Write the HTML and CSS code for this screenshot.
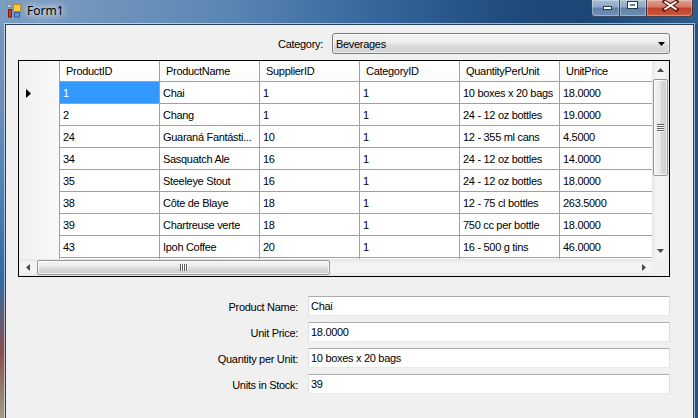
FILE: index.html
```html
<!DOCTYPE html>
<html>
<head>
<meta charset="utf-8">
<title>Form1</title>
<link rel="stylesheet" href="styles.css">
</head>
<body>
<div class="window">
  <div class="titlebar">
    <svg class="appicon" width="14" height="14" viewBox="0 0 14 14">
      <rect x="0" y="0" width="5" height="4" fill="#c4c4c4"/>
      <rect x="0.5" y="0.5" width="4" height="3" fill="none" stroke="#8a8a8a" stroke-width="1"/>
      <rect x="1.5" y="5.5" width="3" height="7.5" fill="#d8392a" stroke="#7a1b12" stroke-width="1"/>
      <rect x="6.5" y="0.5" width="7" height="7" fill="#f8cf35" stroke="#c48a14" stroke-width="1"/>
      <rect x="7.5" y="8.5" width="5" height="4.5" fill="#5d93df" stroke="#2b5aa6" stroke-width="1"/>
    </svg>
    <span class="title">Form1</span>
    <div class="caption-btns">
      <div class="cbtn cmin">
        <svg width="28" height="17" viewBox="0 0 28 17"><rect x="12.5" y="7.5" width="8" height="3" fill="#fff" stroke="#26384c" stroke-width="1"/></svg>
      </div>
      <div class="cbtn cmax">
        <svg width="27" height="17" viewBox="0 0 27 17"><rect x="8" y="2" width="11" height="8" fill="#26384c"/><rect x="9" y="3" width="9" height="6" fill="#fff"/><rect x="11" y="5" width="5" height="2" fill="#5d7ea6"/></svg>
      </div>
      <div class="cbtn cclose">
        <svg width="47" height="17" viewBox="0 0 47 17"><path d="M18.5 2.5 L30.5 10.5 M30.5 2.5 L18.5 10.5" stroke="#5a1c12" stroke-width="4" stroke-linecap="square"/><path d="M18.5 2.5 L30.5 10.5 M30.5 2.5 L18.5 10.5" stroke="#fff" stroke-width="2"/></svg>
      </div>
    </div>
  </div>

  <div class="client">
    <div class="cat-row">
      <span class="cat-label">Category:</span>
      <div class="combo">
        <span class="combo-text">Beverages</span>
        <svg class="combo-arrow" width="7" height="4" viewBox="0 0 7 4"><path d="M0 0 H7 L3.5 4 Z" fill="#000"/></svg>
      </div>
    </div>

    <div class="dgv">
      <div class="dgv-view">
        <div class="row head">
          <div class="rh"></div>
          <div class="ch">ProductID</div>
          <div class="ch">ProductName</div>
          <div class="ch">SupplierID</div>
          <div class="ch">CategoryID</div>
          <div class="ch">QuantityPerUnit</div>
          <div class="ch">UnitPrice</div>
        </div>
        <div class="row">
          <div class="rh"><svg class="cur" width="5" height="9" viewBox="0 0 5 9"><path d="M0 0 L5 4.5 L0 9 Z" fill="#000"/></svg></div>
          <div class="c sel">1</div><div class="c">Chai</div><div class="c">1</div><div class="c">1</div><div class="c">10 boxes x 20 bags</div><div class="c">18.0000</div>
        </div>
        <div class="row">
          <div class="rh"></div>
          <div class="c">2</div><div class="c">Chang</div><div class="c">1</div><div class="c">1</div><div class="c">24 - 12 oz bottles</div><div class="c">19.0000</div>
        </div>
        <div class="row">
          <div class="rh"></div>
          <div class="c">24</div><div class="c">Guaraná Fantásti...</div><div class="c">10</div><div class="c">1</div><div class="c">12 - 355 ml cans</div><div class="c">4.5000</div>
        </div>
        <div class="row">
          <div class="rh"></div>
          <div class="c">34</div><div class="c">Sasquatch Ale</div><div class="c">16</div><div class="c">1</div><div class="c">24 - 12 oz bottles</div><div class="c">14.0000</div>
        </div>
        <div class="row">
          <div class="rh"></div>
          <div class="c">35</div><div class="c">Steeleye Stout</div><div class="c">16</div><div class="c">1</div><div class="c">24 - 12 oz bottles</div><div class="c">18.0000</div>
        </div>
        <div class="row">
          <div class="rh"></div>
          <div class="c">38</div><div class="c">Côte de Blaye</div><div class="c">18</div><div class="c">1</div><div class="c">12 - 75 cl bottles</div><div class="c">263.5000</div>
        </div>
        <div class="row">
          <div class="rh"></div>
          <div class="c">39</div><div class="c">Chartreuse verte</div><div class="c">18</div><div class="c">1</div><div class="c">750 cc per bottle</div><div class="c">18.0000</div>
        </div>
        <div class="row">
          <div class="rh"></div>
          <div class="c">43</div><div class="c">Ipoh Coffee</div><div class="c">20</div><div class="c">1</div><div class="c">16 - 500 g tins</div><div class="c">46.0000</div>
        </div>
        <div class="row">
          <div class="rh"></div>
          <div class="c"></div><div class="c"></div><div class="c"></div><div class="c"></div><div class="c"></div><div class="c"></div>
        </div>
      </div>

      <div class="vscroll">
        <div class="sbtn"><svg width="7" height="4" viewBox="0 0 7 4"><path d="M3.5 0 L7 4 H0 Z" fill="#4a4a4a"/></svg></div>
        <div class="vthumb">
          <svg width="7" height="8" viewBox="0 0 7 8"><g stroke-width="1"><path d="M0 0.5H7M0 2.5H7M0 4.5H7M0 6.5H7" stroke="#5e5e5e"/><path d="M0 1.5H7M0 3.5H7M0 5.5H7M0 7.5H7" stroke="#fff"/></g></svg>
        </div>
        <div class="sfill"></div>
        <div class="sbtn"><svg width="7" height="4" viewBox="0 0 7 4"><path d="M0 0 H7 L3.5 4 Z" fill="#4a4a4a"/></svg></div>
      </div>

      <div class="hscroll">
        <div class="sbtn"><svg width="4" height="7" viewBox="0 0 4 7"><path d="M4 0 V7 L0 3.5 Z" fill="#4a4a4a"/></svg></div>
        <div class="hthumb">
          <svg width="8" height="7" viewBox="0 0 8 7"><g stroke-width="1"><path d="M0.5 0V7M2.5 0V7M4.5 0V7M6.5 0V7" stroke="#5e5e5e"/><path d="M1.5 0V7M3.5 0V7M5.5 0V7M7.5 0V7" stroke="#fff"/></g></svg>
        </div>
        <div class="sfill"></div>
        <div class="sbtn"><svg width="4" height="7" viewBox="0 0 4 7"><path d="M0 0 V7 L4 3.5 Z" fill="#4a4a4a"/></svg></div>
      </div>
      <div class="corner"></div>
    </div>

    <div class="details">
      <span class="lbl">Product Name:</span><div class="tb">Chai</div>
      <span class="lbl">Unit Price:</span><div class="tb">18.0000</div>
      <span class="lbl">Quantity per Unit:</span><div class="tb">10 boxes x 20 bags</div>
      <span class="lbl">Units in Stock:</span><div class="tb">39</div>
    </div>
  </div>
</div>
</body>
</html>
```

FILE: styles.css
```css
* { box-sizing: border-box; margin: 0; padding: 0; }

html, body {
  width: 698px;
  height: 418px;
  overflow: hidden;
}

body {
  font-family: "Liberation Sans", Arial, sans-serif;
  font-size: 11px;
  letter-spacing: -0.3px;
  color: #000;
  background: #f0f0f0;
}

.window {
  width: 698px;
  height: 418px;
  display: flex;
  flex-direction: column;
  background:
    linear-gradient(to right, transparent 693px, #28537f 693px),
    linear-gradient(to bottom, #7899be 0, #6b90b9 25%, #4f82b5 45%, #2e6ba9 66%, #864f4c 84%, #a39c86 100%);
}

/* ---------- title bar ---------- */
.titlebar {
  height: 24px;
  flex: none;
  display: flex;
  align-items: flex-start;
  background: linear-gradient(to right, #7b9cc1 0, #7396bd 12%, #5b87b4 32%, #34649a 55%, #1e4979 75%, #1b4675 84%, #2f5d8c 100%);
}

.appicon {
  margin: 4px 0 0 7px;
  flex: none;
}

.title {
  margin: 3px 0 0 6px;
  font-family: "Noto Sans", "Open Sans", sans-serif;
  font-size: 12px;
  letter-spacing: 0;
  line-height: 16px;
  color: #000;
  text-shadow: 0 0 6px #fff, 0 0 10px rgba(255,255,255,.9), 0 0 16px rgba(255,255,255,.7);
}

.caption-btns {
  margin-left: auto;
  margin-right: 5px;
  display: flex;
  flex: none;
}

.cbtn {
  height: 17px;
  border: 1px solid rgba(22, 38, 58, .75);
  border-top: none;
  box-shadow: inset 0 0 0 1px rgba(255,255,255,.3);
  display: flex;
}
.cbtn svg { display: block; margin: -1px; }

.cmin {
  width: 28px;
  border-right: none;
  border-bottom-left-radius: 4px;
  background: linear-gradient(to bottom, #a5bcd6 0, #8ca7c6 45%, #5f81a9 50%, #6f91b8 100%);
}
.cmax {
  width: 27px;
  border-right: none;
  background: linear-gradient(to bottom, #a5bcd6 0, #8ca7c6 45%, #5f81a9 50%, #6f91b8 100%);
}
.cclose {
  width: 47px;
  border-bottom-right-radius: 4px;
  background: linear-gradient(to bottom, #e0a191 0, #d47764 45%, #c23f27 50%, #cc5a3f 100%);
}

/* ---------- client area ---------- */
.client {
  flex: 1;
  margin: 0 4px 0 5px;
  border: 1px solid #263f5c;
  border-bottom: none;
  box-shadow: 0 0 0 1px rgba(230, 238, 248, .65);
  background: #f0f0f0;
  padding: 8px 23px 0 12px;
  display: flex;
  flex-direction: column;
}

.cat-row {
  display: flex;
  justify-content: flex-end;
  align-items: center;
  height: 21px;
}

.cat-label {
  margin-right: 9px;
}

.combo {
  width: 338px;
  height: 21px;
  border: 1px solid #7b7b7b;
  border-radius: 3px;
  background: linear-gradient(to bottom, #f3f3f3 0, #ececec 48%, #dfdfdf 52%, #d3d3d3 100%);
  box-shadow: inset 0 0 0 1px rgba(255,255,255,.6);
  display: flex;
  align-items: center;
  padding-left: 3px;
}
.combo-text { flex: 1; }
.combo-arrow { margin-right: 4px; }

/* ---------- data grid ---------- */
.dgv {
  margin-top: 6px;
  width: 652px;
  height: 217px;
  border: 1px solid #000;
  display: grid;
  grid-template-columns: 633px 17px;
  grid-template-rows: 198px 17px;
  background: #fff;
}

.dgv-view {
  grid-column: 1;
  grid-row: 1;
  overflow: hidden;
  background: #fff;
}

.row {
  display: flex;
  height: 22px;
}
.row.head { height: 21px; }

.rh {
  flex: none;
  width: 41px;
  border-right: 1px solid #a0a0a0;
  background: linear-gradient(to right, #f0f0f0, #f9f9f9);
  display: flex;
  align-items: center;
  padding-left: 7px;
}

.ch, .c {
  flex: none;
  width: 100px;
  border-right: 1px solid #a0a0a0;
  border-bottom: 1px solid #a0a0a0;
  white-space: nowrap;
  overflow: hidden;
  display: flex;
  align-items: center;
}
.ch {
  padding-left: 6px;
  background: linear-gradient(to bottom, #ffffff, #fbfbfc);
}
.c { padding-left: 3px; padding-top: 1px; }
.c.sel { background: #3399ff; color: #fff; }

/* scrollbars */
.vscroll {
  grid-column: 2;
  grid-row: 1;
  display: flex;
  flex-direction: column;
  background: linear-gradient(to right, #e6e6e6, #f3f3f3 25%, #f3f3f3 75%, #e8e8e8);
}
.hscroll {
  grid-column: 1;
  grid-row: 2;
  display: flex;
  background: linear-gradient(to bottom, #e6e6e6, #f3f3f3 25%, #f3f3f3 75%, #e8e8e8);
}
.corner {
  grid-column: 2;
  grid-row: 2;
  background: #f0f0f0;
}

.sbtn {
  flex: none;
  width: 17px;
  height: 17px;
  display: flex;
  align-items: center;
  justify-content: center;
}
.sfill { flex: 1; }

.vthumb {
  flex: none;
  height: 97px;
  margin: 1px 1px 0 1px;
  border: 1px solid #969696;
  border-radius: 2px;
  background: linear-gradient(to right, #f4f4f4 0, #e9e9e9 45%, #d9d9d9 55%, #cfcfcf 100%);
  box-shadow: inset 0 0 0 1px rgba(255,255,255,.7);
  display: flex;
  align-items: center;
  justify-content: center;
}

.hthumb {
  flex: none;
  width: 293px;
  margin: 1px 0 1px 1px;
  border: 1px solid #969696;
  border-radius: 2px;
  background: linear-gradient(to bottom, #f4f4f4 0, #e9e9e9 45%, #d9d9d9 55%, #cfcfcf 100%);
  box-shadow: inset 0 0 0 1px rgba(255,255,255,.7);
  display: flex;
  align-items: center;
  justify-content: center;
}

/* ---------- details ---------- */
.details {
  margin-top: 19px;
  display: grid;
  grid-template-columns: 280px 362px;
  column-gap: 10px;
  row-gap: 6px;
}

.lbl {
  text-align: right;
  align-self: center;
  padding-top: 2px;
}

.tb {
  height: 20px;
  border: 1px solid;
  border-color: #abadb3 #dbdfe6 #e3e9ef #dbdfe6;
  border-radius: 1px;
  background: #fff;
  padding-left: 2px;
  line-height: 18px;
  white-space: nowrap;
}
```
